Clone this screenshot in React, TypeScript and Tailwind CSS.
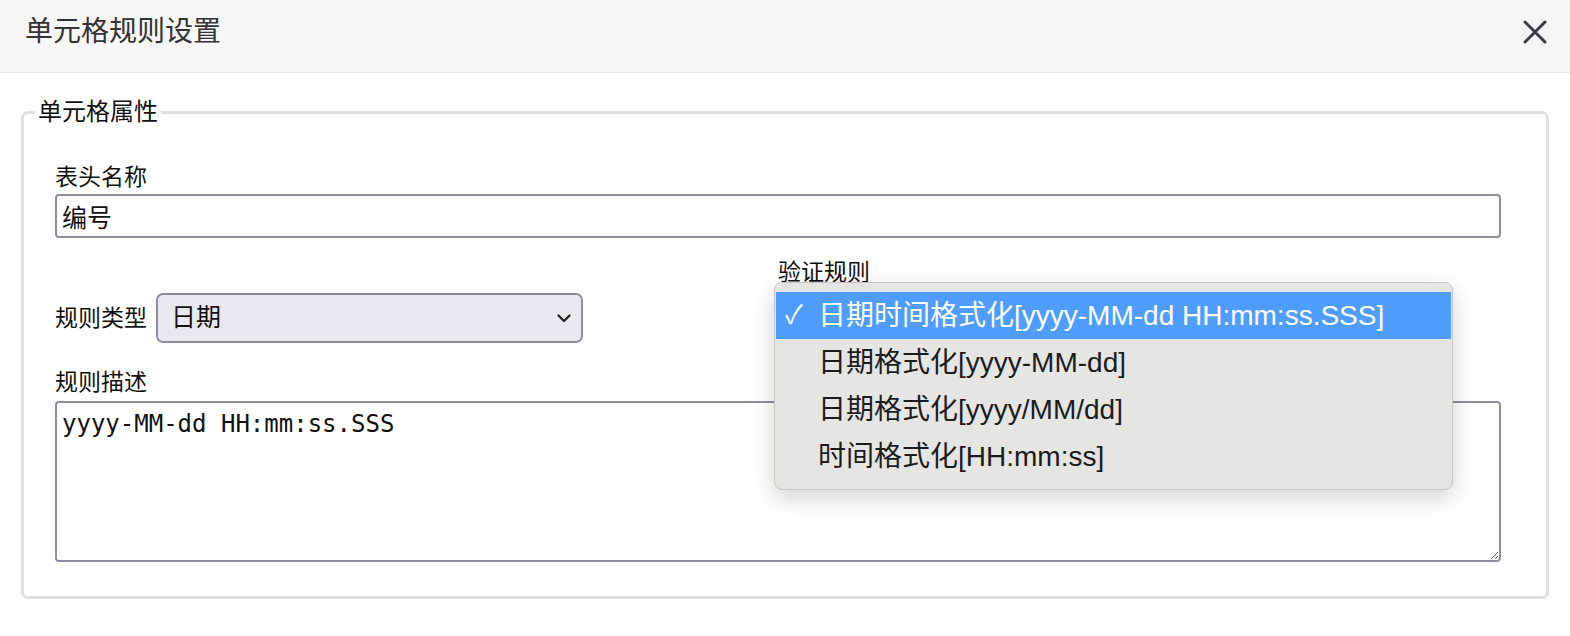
import { useState } from "react";

const options = [
  "日期时间格式化[yyyy-MM-dd HH:mm:ss.SSS]",
  "日期格式化[yyyy-MM-dd]",
  "日期格式化[yyyy/MM/dd]",
  "时间格式化[HH:mm:ss]",
];

function Chevron() {
  return (
    <svg width="14" height="9" viewBox="0 0 14 9" fill="none">
      <path d="M1.5 1.5 L7 7 L12.5 1.5" stroke="#1f1f1f" strokeWidth="2.2" strokeLinecap="round" strokeLinejoin="round" />
    </svg>
  );
}

export default function App() {
  const [name, setName] = useState("编号");
  const [desc, setDesc] = useState("yyyy-MM-dd HH:mm:ss.SSS");
  const [picked, setPicked] = useState(0);

  return (
    <div className="min-h-screen bg-white font-['Liberation_Sans','Noto_Sans_CJK_SC',sans-serif] text-[#111]">
      <div className="flex h-[73px] items-center justify-between border-b border-[#e8e8e8] bg-[#f6f6f6] pb-[8px] pl-[25px] pr-[23px]">
        <h1 className="text-[28px] leading-[36px] text-[#333]">单元格规则设置</h1>
        <svg width="24" height="24" viewBox="0 0 24 24" fill="none">
          <path d="M2 2 L22 22 M22 2 L2 22" stroke="#3a3a44" strokeWidth="3" strokeLinecap="round" />
        </svg>
      </div>

      <div className="px-[21px] pt-[24px]">
        <fieldset className="rounded-[7px] border-[3px] border-[#e0e0e0]">
          <legend className="ml-[11px] px-[3px] text-[24px] leading-[30px]">单元格属性</legend>
          <div className="pb-[34px] pl-[31px] pr-[45px] pt-[34px]">
            <label className="block text-[23px] leading-[32px]">表头名称</label>
            <input
              value={name}
              onChange={(e) => setName(e.target.value)}
              className="mt-[1px] block h-[44px] w-full rounded-[4px] border-2 border-[#8f8d9b] px-[5px] text-[25px] outline-none"
            />

            <div className="mt-[18px] grid grid-cols-2 items-end">
              <div className="flex items-center">
                <span className="text-[23px] leading-[32px]">规则类型</span>
                <div className="ml-[9px] flex h-[50px] w-[427px] items-center justify-between rounded-[7px] border-2 border-[#8f8d9b] bg-[#e9e9ed] pl-[13px] pr-[10px] text-[25px]">
                  <span>日期</span>
                  <Chevron />
                </div>
              </div>
              <div className="flex flex-col">
                <span className="text-[23px] leading-[32px]">验证规则</span>
                <div className="relative mt-[5px]">
                  {/* closed select, covered by its open list */}
                  <div className="flex h-[50px] w-[675px] items-center justify-end rounded-[7px] border-2 border-[#8f8d9b] bg-[#e9e9ed] pr-[10px]">
                    <Chevron />
                  </div>
                  <div className="absolute left-[-4px] top-[-11px] z-10 w-[679px] rounded-[8px] border border-[#c6c6c6] bg-[#e5e5e3] px-[1px] py-[9px] shadow-[0_8px_24px_rgba(0,0,0,0.18)]">
                    {options.map((o, i) => (
                      <div
                        key={o}
                        onClick={() => setPicked(i)}
                        className={`flex h-[47px] items-center text-[28px] ${i === picked ? "bg-[#4f9dff] text-white" : "text-[#1c1c1c]"}`}
                      >
                        <span className="w-[42px] pl-[9px] text-[26px]">{i === picked ? "✓" : ""}</span>
                        <span>{o}</span>
                      </div>
                    ))}
                  </div>
                </div>
              </div>
            </div>

            <label className="mt-[23px] block text-[23px] leading-[32px]">规则描述</label>
            <textarea
              value={desc}
              onChange={(e) => setDesc(e.target.value)}
              className="mt-[3px] block h-[161px] w-full rounded-[4px] border-2 border-[#8f8d9b] px-[5px] pt-[6px] font-['DejaVu_Sans_Mono',monospace] text-[24px] leading-[30px] outline-none"
            />
          </div>
        </fieldset>
      </div>
    </div>
  );
}
